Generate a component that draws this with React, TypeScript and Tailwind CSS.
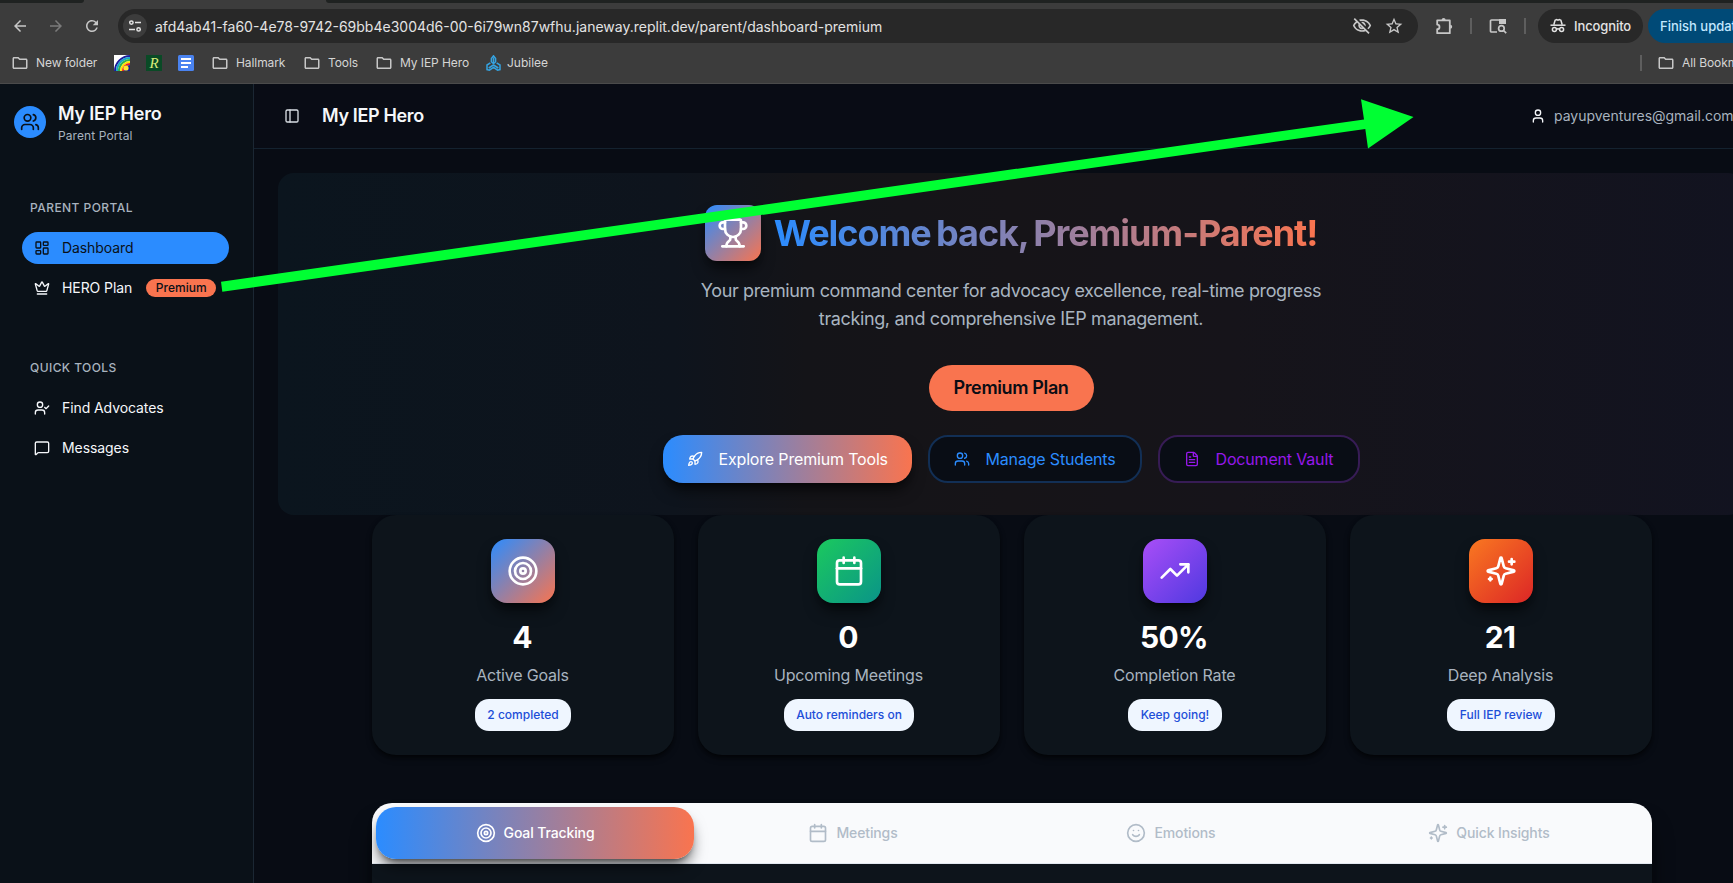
import React from "react";
import type { ReactNode } from "react";
import {
  Users, LayoutDashboard, Crown, UserCheck, MessageSquare, PanelLeft, User,
  Trophy, Rocket, FileText, Target, Calendar, TrendingUp, Smile,
} from "lucide-react";
import { MdArrowBack, MdArrowForward, MdRefresh, MdOutlineVisibilityOff, MdStarOutline, MdOutlineFolder } from "react-icons/md";

function Sparkles({ className }: { className?: string }) {
  return (
    <svg className={className} viewBox="0 0 24 24" fill="none" stroke="currentColor" strokeWidth="2" strokeLinecap="round" strokeLinejoin="round">
      <path d="M9.937 15.5A2 2 0 0 0 8.5 14.063l-6.135-1.582a.5.5 0 0 1 0-.962L8.5 9.936A2 2 0 0 0 9.937 8.5l1.582-6.135a.5.5 0 0 1 .963 0L14.063 8.5A2 2 0 0 0 15.5 9.937l6.135 1.581a.5.5 0 0 1 0 .964L15.5 14.063a2 2 0 0 0-1.437 1.437l-1.582 6.135a.5.5 0 0 1-.963 0z" />
      <path d="M20 3v4M22 5h-4M4 17v2M5 18H3" />
    </svg>
  );
}

function Bookmark({ label, className }: { label: string; className: string }) {
  return (
    <div className={`flex shrink-0 items-center gap-[7px] ${className}`}>
      <MdOutlineFolder className="size-[18px] shrink-0 text-[#c7c7c7]" />
      <span className="tracking-[-0.08px] whitespace-nowrap">{label}</span>
    </div>
  );
}

function BrowserChrome() {
  return (
    <div className="h-[84px] w-full shrink-0 border-b border-[#4b4b4b] bg-[#3c3c3c] text-[#e3e3e3]">
      <div className="flex h-[3px] justify-between">
        <div className="w-[84px] rounded-br-[3px] bg-[#1f2221]" />
        <div className="w-[1407px] rounded-bl-[3px] bg-[#1f2221]" />
      </div>
      <div className="flex h-[46px] items-center">
        <MdArrowBack className="ml-[11px] size-[18px] text-[#c7c7c7]" />
        <MdArrowForward className="ml-[18px] size-[18px] text-[#7b7b7b]" />
        <MdRefresh className="ml-[18px] size-[18px] text-[#c7c7c7]" />
        <div className="ml-[17px] flex h-[34px] w-[1300px] shrink-0 items-center rounded-full bg-[#282828] pl-[5px]">
          <div className="flex size-6 items-center justify-center rounded-full bg-[#3c3c3c]">
            <svg width="14" height="14" viewBox="0 0 14 14" fill="none" stroke="#e3e3e3" strokeWidth="1.5">
              <circle cx="3.4" cy="3.6" r="1.7" /><path d="M7 3.6h6M1 10.4h6" /><circle cx="10.6" cy="10.4" r="1.7" />
            </svg>
          </div>
          <span className="ml-2 w-[1197px] text-[14px] whitespace-nowrap">afd4ab41-fa60-4e78-9742-69bb4e3004d6-00-6i79wn87wfhu.janeway.replit.dev/parent/dashboard-premium</span>
          <MdOutlineVisibilityOff className="size-[20px] shrink-0 text-[#c7c7c7]" />
          <MdStarOutline className="ml-[12px] size-[20px] shrink-0 text-[#c7c7c7]" />
        </div>
        <svg className="ml-[18px] shrink-0" width="18" height="18" viewBox="0 0 18 18" fill="none" stroke="#c7c7c7" strokeWidth="1.8" strokeLinejoin="round">
          <path d="M1.2 3.4h12.6v12.8H1.2v-4a2.3 2.3 0 0 0 0-4.6z" />
          <path d="M5.6 3a2 2 0 0 1 4 0zM14.2 7.8a2 2 0 0 1 0 4z" fill="#c7c7c7" stroke="none" />
        </svg>
        <div className="ml-[16px] h-4 w-[2px] shrink-0 bg-[#5e5e5e]" />
        <svg className="ml-[17px] shrink-0" width="18" height="16" viewBox="0 0 18 16" fill="none" stroke="#c7c7c7" strokeWidth="1.7">
          <path d="M8 14H2.5a1 1 0 0 1-1-1V3a1 1 0 0 1 1-1H16v4" /><path d="M10 1h7v5h-7z" fill="#c7c7c7" stroke="none" />
          <circle cx="12.4" cy="10.4" r="2.8" /><path d="m14.5 12.5 2.7 2.7" />
        </svg>
        <div className="ml-[17px] h-4 w-[2px] shrink-0 bg-[#5e5e5e]" />
        <div className="ml-[12px] flex h-[34px] w-[105px] shrink-0 items-center rounded-full bg-[#282828] pl-[12px]">
          <svg width="16" height="16" viewBox="0 0 16 16" fill="none" stroke="#e3e3e3" strokeWidth="1.5">
            <path d="M.5 7.2h15" /><path d="M3.8 6.8 5.1 2.2l1.5-.6 1.4.5 1.4-.5 1.5.6 1.3 4.6" /><circle cx="4.4" cy="11.6" r="2" /><circle cx="11.6" cy="11.6" r="2" /><path d="M6.4 11.3q1.6-.9 3.2 0" />
          </svg>
          <span className="ml-[8px] pt-px text-[13px] font-medium tracking-[-0.1px]">Incognito</span>
        </div>
        <div className="ml-[5px] flex h-[34px] min-w-0 flex-1 items-center overflow-hidden rounded-l-full bg-[#004a77] pl-[12px] text-[#c2e7ff]">
          <span className="pt-px text-[13px] font-medium whitespace-nowrap">Finish update</span>
        </div>
      </div>
      <div className="flex h-[28px] items-center pl-[11px] text-[12px] text-[#d5d5d5]">
        <Bookmark label="New folder" className="w-[103px]" />
        <svg className="shrink-0" width="16" height="16" viewBox="0 0 16 16">
          <path fill="#fff" d="M0 0h16v16H0z" />
          <g fill="none" strokeWidth="2">
            <path d="M1 16A15 15 0 0 1 16 1" stroke="#1c1c9c" /><path d="M3 16A13 13 0 0 1 16 3" stroke="#17a5c8" /><path d="M5 16A11 11 0 0 1 16 5" stroke="#31b54a" />
            <path d="M7 16a9 9 0 0 1 9-9" stroke="#ffe600" /><path d="M9 16a7 7 0 0 1 7-7" stroke="#e8231d" />
          </g>
          <path d="M10 16a6 6 0 0 1 6-6v6z" fill="#14208c" /><circle cx="12" cy="13" r="2.6" fill="#ffe92e" />
        </svg>
        <div className="ml-[16px] flex size-4 shrink-0 items-center justify-center bg-[#0a4a26] font-['Liberation_Serif',serif] text-[15px] leading-none text-[#d9ec7a] italic">R</div>
        <svg className="ml-[16px] shrink-0" width="16" height="16" viewBox="0 0 16 16">
          <rect width="16" height="16" rx="1.5" fill="#4a83f0" /><path d="M3 4h10M3 8h10M3 12h7" stroke="#fff" strokeWidth="2" />
        </svg>
        <Bookmark label="Hallmark" className="ml-[17px] w-[92px]" />
        <Bookmark label="Tools" className="w-[72px]" />
        <Bookmark label="My IEP Hero" className="w-[111px]" />
        <svg className="shrink-0" width="15" height="16" viewBox="0 0 15 16" fill="none" stroke="#35a3e0" strokeWidth="1.5">
          <path d="M7.5 8V2.5M5.4 7V3.4L7.5.8l2.1 2.6V7M7.5 10l-4.8 3M7.5 10l4.8 3M4.4 7.8 1 10v4.6l2.4.6 4.1-2.9 4.1 2.9 2.4-.6V10l-3.4-2.2M5.4 7l2.1 1.5L9.6 7" />
        </svg>
        <span className="ml-[6px] w-[1133px] shrink-0">Jubilee</span>
        <div className="h-4 w-[2px] shrink-0 bg-[#5e5e5e]" />
        <Bookmark label="All Bookmarks" className="ml-[15px]" />
      </div>
    </div>
  );
}

function NavItem({ icon, label, className, children }: { icon: ReactNode; label: string; className: string; children?: ReactNode }) {
  return (
    <div className={`flex h-8 w-[207px] items-center pl-3 text-[14px] ${className}`}>
      {icon}
      <span className="ml-3 pb-0.5 tracking-[-0.08px]">{label}</span>
      {children}
    </div>
  );
}

function Sidebar() {
  return (
    <aside className="flex w-[254px] shrink-0 flex-col border-r border-[#1b2733] bg-[#0a1118]">
      <div className="flex h-[76px] items-center gap-3 pl-[14px]">
        <div className="flex size-8 items-center justify-center rounded-full bg-[#2b8cff]">
          <Users className="size-5 text-[#0a1118]" />
        </div>
        <div className="pt-1.5">
          <div className="text-[18px] leading-[22px] font-semibold tracking-[-0.2px] text-[#f5f7fa]">My IEP Hero</div>
          <div className="text-[12px] leading-[22px] tracking-[0.1px] text-[#a8b3bf]">Parent Portal</div>
        </div>
      </div>
      <div className="flex flex-col pt-[40px] pl-[22px]">
        <div className="pl-2 text-[12px] leading-4 font-medium tracking-[0.45px] text-[#a8b3bf]">PARENT PORTAL</div>
        <NavItem icon={<LayoutDashboard className="size-4" />} label="Dashboard" className="mt-4 rounded-full bg-[#2b8cff] text-[#0a1118]" />
        <NavItem icon={<Crown className="size-4" />} label="HERO Plan" className="mt-2 text-[#f5f7fa]">
          <span className="ml-[14px] flex h-[18px] w-[70px] items-center justify-center rounded-full bg-[#f9744f] text-[12px] font-medium text-[#0a1118]">Premium</span>
        </NavItem>
        <div className="mt-[56px] pl-2 text-[12px] leading-4 font-medium tracking-[0.42px] text-[#a8b3bf]">QUICK TOOLS</div>
        <NavItem icon={<UserCheck className="size-4" />} label="Find Advocates" className="mt-4 text-[#f5f7fa]" />
        <NavItem icon={<MessageSquare className="size-4" />} label="Messages" className="mt-2 text-[#f5f7fa]" />
      </div>
    </aside>
  );
}

const stats = [
  { icon: Target, value: "4", label: "Active Goals", note: "2 completed", color: "from-[#2b8cff] to-[#f9744f]" },
  { icon: Calendar, value: "0", label: "Upcoming Meetings", note: "Auto reminders on", color: "from-[#1bc95e] to-[#0a9488]" },
  { icon: TrendingUp, value: "50%", label: "Completion Rate", note: "Keep going!", color: "from-[#a94ef7] to-[#4f39e0]" },
  { icon: Sparkles, value: "21", label: "Deep Analysis", note: "Full IEP review", color: "from-[#f97821] to-[#dc2626]" },
];

const tabs = [
  { icon: Target, label: "Goal Tracking", active: true },
  { icon: Calendar, label: "Meetings", active: false },
  { icon: Smile, label: "Emotions", active: false },
  { icon: Sparkles, label: "Quick Insights", active: false },
];

function Hero() {
  return (
    <section className="flex h-[342px] flex-col items-center rounded-2xl bg-[linear-gradient(to_right,#0b151e_0%,#0e141d_27%,#141418_36%,#161418_50%,#16141a_65%,#121320_100%)] pt-8">
      <div className="flex items-center gap-[13px]">
        <div className="flex size-14 items-center justify-center rounded-xl bg-linear-to-br/srgb from-[#2b8cff] to-[#f9744f] shadow-lg shadow-black/60">
          <Trophy className="size-8 text-white" />
        </div>
        <h1 className="bg-linear-to-r/srgb from-[#2b8cff] to-[#f9744f] bg-clip-text text-[36px] leading-10 font-bold tracking-[-1.06px] whitespace-nowrap text-transparent [word-spacing:-2px]">Welcome back, Premium-Parent!</h1>
      </div>
      <p className="mt-4 w-[672px] text-center text-[18px] leading-7 tracking-[-0.37px] text-[#a9b4c0]">Your premium command center for advocacy excellence, real-time progress tracking, and comprehensive IEP management.</p>
      <div className="mt-8 flex h-[46px] w-[165px] items-center justify-center rounded-full bg-[#f9744f] pb-px text-[18px] font-semibold tracking-[-0.36px] text-[#0a0d14]">Premium Plan</div>
      <div className="mt-6 flex gap-4 text-[16px] tracking-[-0.17px]">
        <div className="flex h-12 w-[249px] items-center gap-4 rounded-[20px] bg-linear-to-r/srgb from-[#2b8cff] to-[#f9744f] pl-6 text-white shadow-lg shadow-black/60"><Rocket className="size-4" />Explore Premium Tools</div>
        <div className="flex h-12 w-[214px] items-center gap-4 rounded-[20px] border-2 border-[#122f55] bg-[#090d15] pl-6 text-[#2b8cff]"><Users className="size-4" />Manage Students</div>
        <div className="flex h-12 w-[202px] items-center gap-4 rounded-[20px] border-2 border-[#371c55] bg-[#090d15] pl-6 text-[#9618ea]"><FileText className="size-4" />Document Vault</div>
      </div>
    </section>
  );
}

export default function App() {
  return (
    <div className="relative flex h-[883px] w-[1733px] flex-col overflow-hidden bg-[#080c14] font-[Inter,sans-serif]">
      <BrowserChrome />
      <div className="flex min-h-0 flex-1">
        <Sidebar />
        <main className="min-w-0 flex-1 overflow-hidden">
          <header className="flex h-[65px] items-center border-b border-[#14222f] bg-[#090c15]">
            <PanelLeft className="ml-[30px] size-4 text-[#d8dde3]" />
            <span className="ml-[22px] pb-0.5 text-[18px] font-semibold tracking-[-0.35px] text-[#f5f7fa]">My IEP Hero</span>
            <User className="ml-auto size-4 text-[#f5f7fa]" />
            <span className="ml-2 w-[179px] shrink-0 pb-0.5 text-[14px] tracking-[-0.02px] text-[#a8b3bf]">payupventures@gmail.com</span>
          </header>
          <div className="w-[1490px] px-6 pt-6">
            <div className="w-[1466px]"><Hero /></div>
            <div className="ml-[94px] grid w-[1280px] grid-cols-4 gap-6">
              {stats.map(({ icon: Icon, value, label, note, color }) => (
                <div key={label} className="flex h-[240px] flex-col items-center rounded-[24px] bg-[#0d141b] pt-6 shadow-md shadow-black/60">
                  <div className={`flex size-16 items-center justify-center rounded-2xl bg-linear-to-br/srgb shadow-lg shadow-black/60 ${color}`}><Icon className="size-8 text-white" /></div>
                  <div className="mt-4 pr-0.5 text-[30px] leading-9 font-bold tracking-[-0.7px] text-white">{value}</div>
                  <div className="mt-2 pr-px text-[16px] leading-6 tracking-[-0.18px] text-[#a8b3bf]">{label}</div>
                  <div className="mt-3 flex h-8 items-center rounded-[14px] bg-[#eff6ff] px-[12.5px] text-[12px] font-medium text-[#1d4ed8]">{note}</div>
                </div>
              ))}
            </div>
            <div className="mt-12 ml-[94px] h-[200px] w-[1280px] overflow-hidden rounded-[20px] bg-[#0d141b] shadow-xl shadow-black/80">
              <div className="grid h-[61px] grid-cols-4 border-b border-[#e2e8f0] bg-[#f9fafc] p-1">
                {tabs.map(({ icon: Icon, label, active }) => (
                  <div key={label} className={`flex h-[52px] items-center justify-center gap-2 rounded-[20px] text-[14px] font-medium ${active ? "bg-linear-to-r/srgb from-[#2b8cff] to-[#f9744f] text-white shadow-lg shadow-black/60" : "text-[#b1bcc8]"}`}>
                    <Icon className="size-5" /><span className="pb-0.5 tracking-[-0.12px]">{label}</span>
                  </div>
                ))}
              </div>
            </div>
          </div>
        </main>
      </div>
      <svg className="pointer-events-none absolute inset-0" width="1733" height="883">
        <polygon points="221,281.7 1364,119.5 1361,99.3 1413.5,117 1368,148.5 1365.3,129 222.3,291.7" fill="#00ff33" />
      </svg>
    </div>
  );
}
